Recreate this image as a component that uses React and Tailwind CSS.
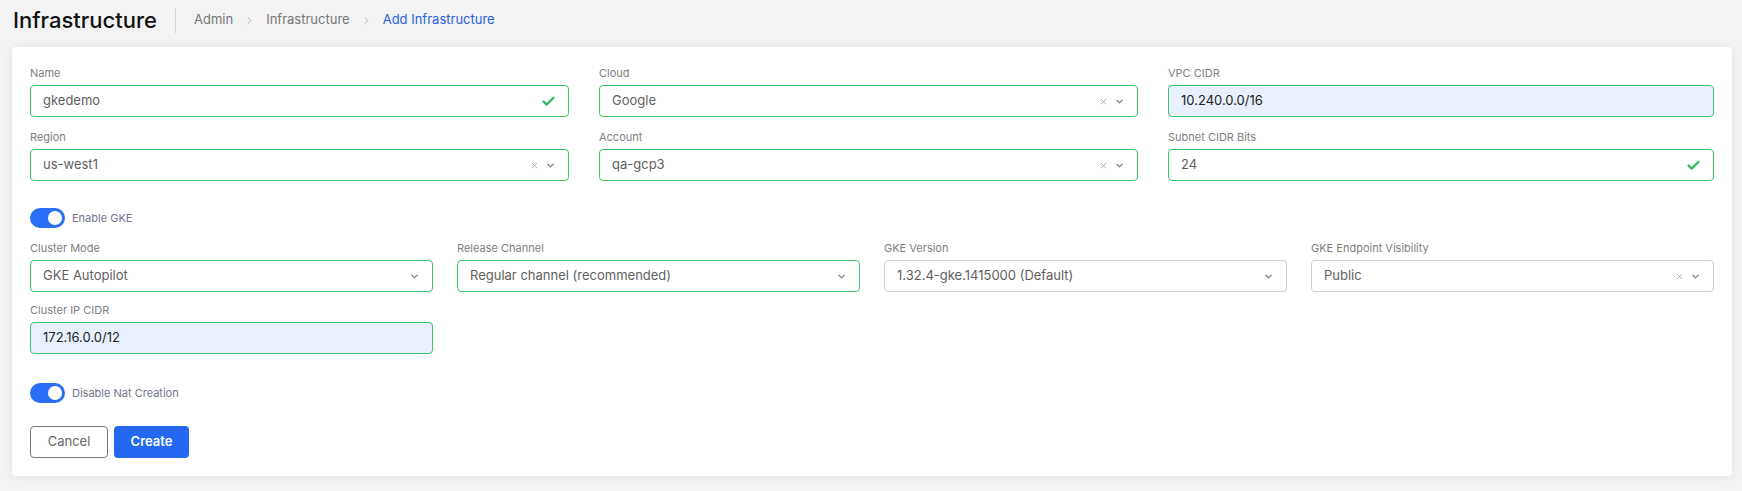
import { Check, ChevronDown, ChevronRight, X } from 'lucide-react';

const font = { fontFamily: 'Inter, "Open Sans", sans-serif' };

function Label({ children }) {
  return <div className="text-[11px] leading-4 text-[#808080] mb-1">{children}</div>;
}

function TextField({ label, value, valid, filled }) {
  return (
    <div>
      <Label>{label}</Label>
      <div
        className={`h-8 flex items-center px-[12px] rounded-[4px] border ${
          filled ? 'bg-[#e8f0fe] border-[#3cc46a]' : 'bg-white border-[#3cc46a]'
        }`}
      >
        <span className={`flex-1 text-[13px] ${filled ? 'text-[#222]' : 'text-[#5f5f5f]'}`}>{value}</span>
        {valid && <Check className="w-[15px] h-[15px] text-[#2fba5c]" strokeWidth={3.5} />}
      </div>
    </div>
  );
}

function SelectField({ label, value, clearable, green = true }) {
  return (
    <div>
      <Label>{label}</Label>
      <div
        className={`h-8 flex items-center pl-[12px] pr-[12px] rounded-[4px] border bg-white ${
          green ? 'border-[#3cc46a]' : 'border-[#cfcfcf]'
        }`}
      >
        <span className="flex-1 text-[13px] text-[#5f5f5f]">{value}</span>
        {clearable && <X className="w-[9px] h-[9px] text-[#999] mr-[6px]" strokeWidth={2} />}
        <ChevronDown className="w-[11px] h-[11px] text-[#777]" strokeWidth={2.5} />
      </div>
    </div>
  );
}

function Toggle({ label }) {
  return (
    <div className="flex items-center gap-[7px]">
      <div className="w-[35px] h-5 rounded-full bg-[#2a6ef5] flex items-center justify-end pr-[3px]">
        <div className="w-[14px] h-[14px] rounded-full bg-white" />
      </div>
      <span className="text-[11px] text-[#74748a]">{label}</span>
    </div>
  );
}

export default function App() {
  return (
    <div className="min-h-screen bg-[#f3f3f3] pb-[14px]" style={font}>
      <div className="h-10 flex items-center pl-[13px]">
        <h1 className="text-[22px] font-medium text-[#111]">Infrastructure</h1>
        <div className="w-px h-[25px] bg-[#d4d4d4] ml-[18px] mr-[18px]" />
        <nav className="flex items-center text-[13px] gap-[11px]">
          <span className="text-[#777]">Admin</span>
          <ChevronRight className="w-[11px] h-[11px] text-[#aaa]" />
          <span className="text-[#777]">Infrastructure</span>
          <ChevronRight className="w-[11px] h-[11px] text-[#aaa]" />
          <span className="text-[#2a5fe0]">Add Infrastructure</span>
        </nav>
      </div>

      <div className="mt-[7px] ml-3 mr-[10px] bg-white rounded-[4px] shadow-[0_0_10px_rgba(0,0,0,0.07)] px-[18px] pt-[18px] pb-[18px]">
        <div className="grid grid-cols-[539px_539px_1fr] gap-x-[30px] gap-y-3">
          <TextField label="Name" value="gkedemo" valid />
          <SelectField label="Cloud" value="Google" clearable />
          <TextField label="VPC CIDR" value="10.240.0.0/16" filled />
          <SelectField label="Region" value="us-west1" clearable />
          <SelectField label="Account" value="qa-gcp3" clearable />
          <TextField label="Subnet CIDR Bits" value="24" valid />
        </div>

        <div className="mt-[27px]">
          <Toggle label="Enable GKE" />
        </div>

        <div className="mt-[12px] grid grid-cols-4 gap-x-6 gap-y-[10px]">
          <SelectField label="Cluster Mode" value="GKE Autopilot" />
          <SelectField label="Release Channel" value="Regular channel (recommended)" />
          <SelectField label="GKE Version" value="1.32.4-gke.1415000 (Default)" green={false} />
          <SelectField label="GKE Endpoint Visibility" value="Public" clearable green={false} />
          <TextField label="Cluster IP CIDR" value="172.16.0.0/12" filled />
        </div>

        <div className="mt-[29px]">
          <Toggle label="Disable Nat Creation" />
        </div>

        <div className="mt-[23px] flex gap-[6px]">
          <button className="w-[78px] h-8 rounded-[4px] border border-[#7a7a7a] text-[13px] text-[#666] bg-white">
            Cancel
          </button>
          <button className="w-[75px] h-8 rounded-[4px] bg-[#2468f2] text-[13px] font-semibold text-white">
            Create
          </button>
        </div>
      </div>
    </div>
  );
}
